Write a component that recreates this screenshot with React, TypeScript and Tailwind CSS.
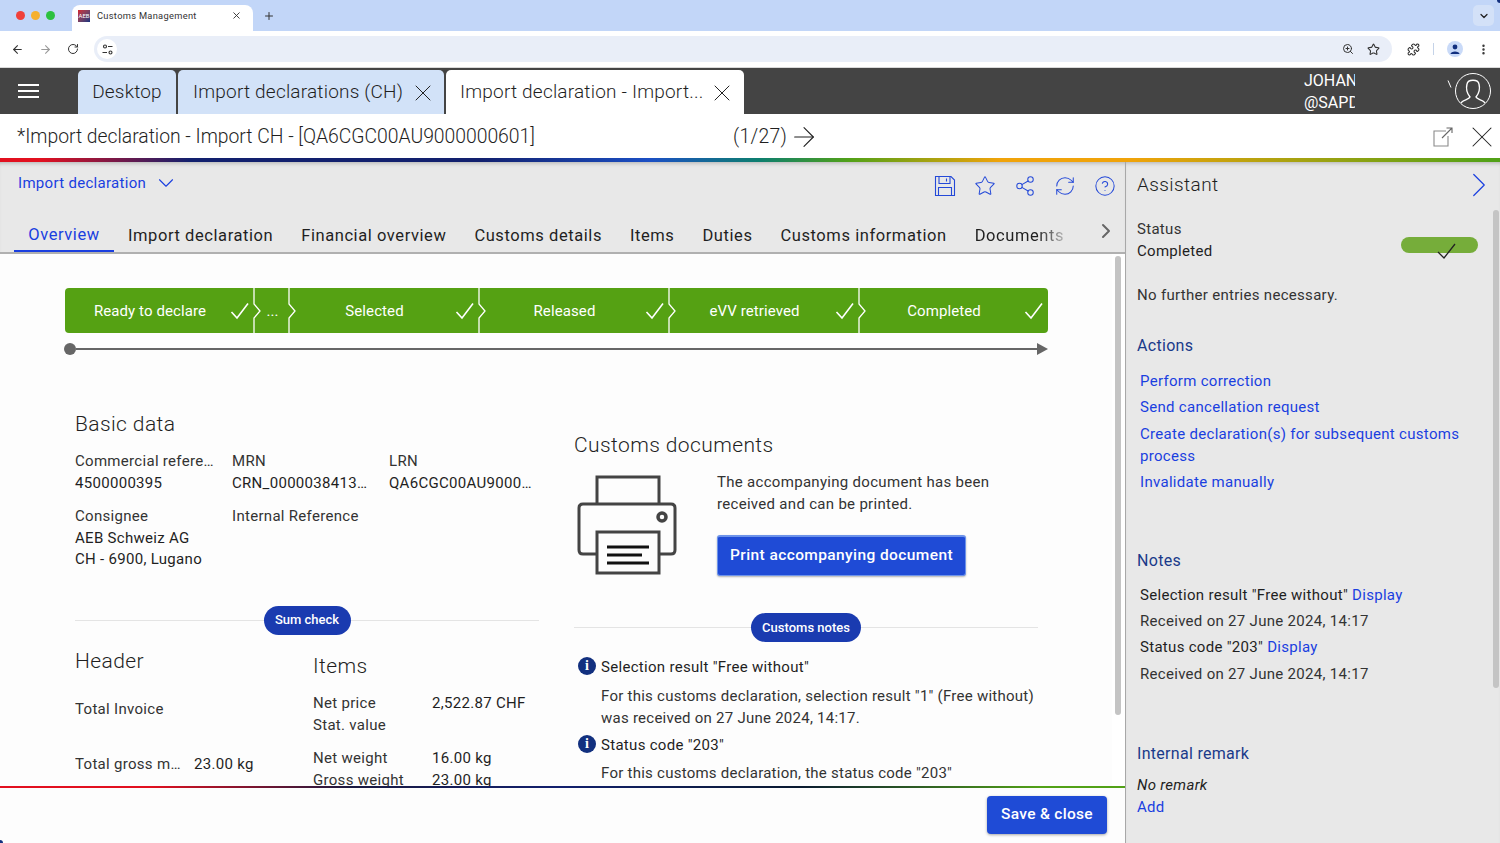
import { ArrowLeft, ArrowRight, ChevronDown, ChevronRight, CircleHelp, EllipsisVertical, Plus, Puzzle, RefreshCw, RotateCw, Share2, Star, X, ZoomIn } from 'lucide-react';

const font = { fontFamily: 'Roboto, "Liberation Sans", sans-serif' };

const steps = [
  { label: 'Ready to declare', width: 'w-[189px]', check: true },
  { label: '...', width: 'w-[35px]', check: false },
  { label: 'Selected', width: 'w-[190px]', check: true },
  { label: 'Released', width: 'w-[190px]', check: true },
  { label: 'eVV retrieved', width: 'w-[190px]', check: true },
  { label: 'Completed', width: 'w-[189px]', check: true },
];

const tabs = ['Import declaration', 'Financial overview', 'Customs details', 'Items', 'Duties', 'Customs information'];

const Check = () => (
  <svg width="20" height="18" viewBox="0 0 20 18" fill="none" stroke="white" strokeWidth="1.6" className="shrink-0">
    <path d="M1.5 10 L7 16 L18 1.5" />
  </svg>
);

const Chevron = () => (
  <svg width="9" height="45" viewBox="0 0 9 45" fill="none" stroke="white" strokeWidth="1.3" className="absolute left-[-1px] top-0">
    <path d="M1 0 V16 L7 23 L1 30 V45" />
  </svg>
);

const Field = ({ label, children }: { label: string; children?: React.ReactNode }) => (
  <div className="min-w-0 leading-[21.5px]">
    <div className="truncate text-[#333]">{label}</div>
    {children}
  </div>
);

const Divider = ({ label, pill }: { label: string; pill: string }) => (
  <div className="flex items-center">
    <div className="h-px flex-1 bg-[#e4e4e4]" />
    <div className={`flex h-[29px] items-center justify-center rounded-full bg-[#1a3bb0] text-[13px] font-medium tracking-normal text-white ${pill}`}>{label}</div>
    <div className="h-px flex-1 bg-[#e4e4e4]" />
  </div>
);

const InfoDot = () => (
  <div className="-mt-[2px] flex h-[18px] w-[18px] shrink-0 items-center justify-center rounded-full bg-[#12307f] text-[14px] font-bold leading-none text-white" style={{ fontFamily: '"Liberation Serif", serif' }}>
    i
  </div>
);

const Printer = () => (
  <svg width="100" height="100" viewBox="0 0 100 100" fill="none" stroke="#444" strokeWidth="3" className="-mt-px ml-[3px] shrink-0">
    <path d="M20 29 V2 H82 V29" />
    <path d="M20 79 H6 Q2 79 2 75 V33 Q2 29 6 29 H94 Q98 29 98 33 V75 Q98 79 94 79 H82" />
    <rect x="20" y="57" width="62" height="41" />
    <circle cx="85" cy="42" r="4" strokeWidth="3.5" />
    <path d="M30 72 H72 M30 80 H65 M30 88 H72" stroke="#111" />
  </svg>
);

const FloppyIcon = () => (
  <svg width="22" height="22" viewBox="0 0 22 22" fill="none" stroke="#2449d8" strokeWidth="1.1">
    <path d="M1.5 1.5 H17 L20.5 5 V20.5 H1.5 Z" />
    <path d="M5 1.5 V8.5 H16 V1.5 M12.5 3.5 V6.5 M4.5 20.5 V12.5 H17.5 V20.5" />
  </svg>
);

const PopOutIcon = () => (
  <svg width="20" height="20" viewBox="0 0 20 20" fill="none" stroke="#8a8a8a" strokeWidth="1.1">
    <path d="M13 4 H1 V19 H15 V9" />
    <path d="M9 11 L19 1 M13.5 1 H19 V6" stroke="#666" />
  </svg>
);

const BodyRow = ({ children }: { children: React.ReactNode }) => <div className="leading-[22px] text-[#333]">{children}</div>;

export default function App() {
  return (
    <div style={font} className="relative flex h-[843px] w-[1500px] flex-col overflow-hidden bg-white text-[15px] tracking-[0.3px] text-[#1f1f1f]">
      {/* Browser tab strip */}
      <div className="flex h-[31px] shrink-0 items-end bg-[#c2d6f8] pl-[16px] pr-[6px]">
        <div className="mb-[11px] flex w-[56px] gap-[6px]">
          <span className="h-[9px] w-[9px] rounded-full bg-[#f0403a]" />
          <span className="h-[9px] w-[9px] rounded-full bg-[#f5b02e]" />
          <span className="h-[9px] w-[9px] rounded-full bg-[#2cc13f]" />
        </div>
        <div className="flex h-[26px] w-[181px] items-center rounded-t-[8px] bg-white pb-[5px] pl-[6px] pr-[11px]">
          <div className="flex h-[12px] w-[12px] items-center justify-center overflow-hidden bg-gradient-to-br from-[#d4202c] to-[#12307f] text-[6px] leading-none tracking-normal text-white">AEB</div>
          <span className="ml-[7px] flex-1 text-[9.3px] text-[#333]">Customs Management</span>
          <X size={11} strokeWidth={2} className="text-[#333]" />
        </div>
        <Plus size={12} strokeWidth={2} className="mb-[9px] ml-[10px] text-[#333]" />
        <div className="mb-[5px] ml-auto flex h-[21px] w-[21px] items-center justify-center rounded-[5px] bg-[#d3e1f8]">
          <ChevronDown size={12} strokeWidth={2.5} className="text-[#222]" />
        </div>
      </div>

      {/* Browser toolbar */}
      <div className="flex h-[37px] shrink-0 items-center border-b border-[#d9d9d9] bg-white pl-[11px]">
        <ArrowLeft size={13} strokeWidth={2} className="text-[#333]" />
        <ArrowRight size={13} strokeWidth={2} className="ml-[15px] text-[#9a9a9a]" />
        <RotateCw size={12} strokeWidth={2} className="ml-[15px] text-[#333]" />
        <div className="ml-[15px] flex h-[26px] w-[1298px] items-center rounded-full bg-[#e9eef8] pl-[3px] pr-[12px]">
          <div className="flex h-[20px] w-[20px] items-center justify-center rounded-full bg-white">
            <svg width="11" height="11" viewBox="0 0 11 11" fill="none" stroke="#333" strokeWidth="1.1">
              <circle cx="3" cy="2.5" r="1.5" />
              <path d="M6 2.5 H10.5 M0.5 8.5 H5" />
              <circle cx="8.5" cy="8.5" r="1.5" />
            </svg>
          </div>
          <ZoomIn size={12} strokeWidth={2} className="ml-auto text-[#333]" />
          <Star size={13} strokeWidth={2} className="ml-[13px] text-[#333]" />
        </div>
        <Puzzle size={13} strokeWidth={2} className="ml-[15px] text-[#333]" />
        <div className="ml-[13px] h-[12px] w-px bg-[#c5d3e8]" />
        <div className="ml-[13px] flex h-[16px] w-[16px] items-center justify-center rounded-full bg-[#c9daf8]">
          <svg width="10" height="10" viewBox="0 0 10 10" fill="#12307f">
            <circle cx="5" cy="3" r="2.4" />
            <path d="M0.5 10 C0.5 6.5 9.5 6.5 9.5 10 Z" />
          </svg>
        </div>
        <EllipsisVertical size={13} strokeWidth={2.5} className="ml-[14px] text-[#333]" />
      </div>

      {/* App header with document tabs */}
      <div className="flex h-[46px] shrink-0 items-end bg-[#444444] text-[19px] font-light tracking-[0.2px]">
        <div className="flex h-[46px] w-[78px] items-center pb-[1px] pl-[18px]">
          <div className="flex w-[21px] flex-col gap-[4px]">
            <span className="h-[2px] bg-white" />
            <span className="h-[2px] bg-white" />
            <span className="h-[2px] bg-white" />
          </div>
        </div>
        <div className="flex h-[44px] w-[98px] items-center justify-center rounded-t-[5px] bg-[#d2e2f8] pt-[1px]">Desktop</div>
        <div className="ml-[2px] flex h-[44px] w-[266px] items-center rounded-t-[5px] bg-[#d2e2f8] pl-[15px] pt-[1px]">
          Import declarations (CH)
          <X size={28} strokeWidth={0.85} className="ml-[6px]" />
        </div>
        <div className="ml-[2px] flex h-[44px] w-[298px] items-center rounded-t-[5px] bg-white pl-[14px] pt-[1px]">
          Import declaration - Import...
          <X size={28} strokeWidth={0.85} className="ml-[5px]" />
        </div>
        <div className="ml-[560px] w-[51px] overflow-hidden whitespace-nowrap text-[16px] font-normal leading-[22px] tracking-normal text-white">
          JOHANNES
          <br />
          @SAPDEMO
        </div>
        <svg width="5" height="8" viewBox="0 0 5 8" fill="none" stroke="white" strokeWidth="1" className="mb-[26px] ml-[92px]">
          <path d="M1 0.5 L4 7.5" />
        </svg>
        <div className="mb-[5px] ml-[3px] flex h-[36px] w-[36px] items-center justify-center overflow-hidden rounded-full border-[1.5px] border-white">
          <svg width="30" height="30" viewBox="0 0 30 30" fill="none" stroke="white" strokeWidth="1.4">
            <path d="M2 29 C2 24 11 24 12 21 C8 16 8 12 9 8 C10 3 20 3 21 8 C22 12 22 16 18 21 C19 24 28 24 28 29" />
          </svg>
        </div>
      </div>

      {/* Title bar */}
      <div className="flex h-[44px] shrink-0 items-center bg-white pl-[17px] pt-[1px] text-[19.35px] font-light tracking-[-0.02px]">
        <div className="w-[716px] whitespace-nowrap">*Import declaration - Import CH - [QA6CGC00AU9000000601]</div>
        <span className="tracking-[0.3px]">(1/27)</span>
        <ArrowRight size={32} strokeWidth={0.8} className="ml-px" />
        <div className="ml-auto flex items-center gap-[11px]">
          <PopOutIcon />
          <X size={36} strokeWidth={0.7} />
        </div>
      </div>
      <div className="h-[4px] shrink-0 bg-[linear-gradient(90deg,#e2101f_0px,#e2101f_40px,#12206e_190px,#12206e_480px,#1b4fc4_650px,#0d7f6e_760px,#52a117_850px,#f0a30a_1000px,#f0a30a_1130px,#52a117_1490px)]" />

      <div className="flex min-h-0 flex-1">
        {/* Main column */}
        <div className="flex w-[1125px] shrink-0 flex-col">
          <div className="h-[92px] shrink-0 border-b-2 border-[#b0b0b0] bg-[#e8e8e8] shadow-[inset_0_4px_4px_-3px_rgba(0,0,0,0.25)]">
            <div className="flex h-[46px] items-center pl-[18px] pr-[9px]">
              <span className="-mt-[4px] text-[#1a3fe0]">Import declaration</span>
              <ChevronDown size={26} strokeWidth={1} className="-mt-[4px] ml-[7px] text-[#1a3fe0]" />
              <div className="ml-auto flex items-center gap-[18px] pt-[2px] text-[#2449d8]">
                <FloppyIcon />
                <Star size={22} strokeWidth={1.1} />
                <Share2 size={22} strokeWidth={1.1} />
                <RefreshCw size={22} strokeWidth={1.1} />
                <CircleHelp size={22} strokeWidth={1.1} />
              </div>
            </div>
            <div className="flex h-[44px] items-end pl-[14px] text-[16.5px] tracking-[0.57px]">
              <div className="flex h-[44px] w-[100px] items-center justify-center border-b-[2px] border-[#1a3fe0] pt-[12px] text-[#1a3fe0]">Overview</div>
              <div className="ml-[14px] flex h-[44px] items-center gap-[28px] pt-[12px] whitespace-nowrap">
                {tabs.map((tab) => (
                  <span key={tab}>{tab}</span>
                ))}
                <span className="bg-[linear-gradient(90deg,#1f1f1f_0%,#1f1f1f_70%,#b5b5b5_100%)] bg-clip-text text-transparent">Documents</span>
              </div>
              <ChevronRight size={24} strokeWidth={2} className="mb-[9px] ml-[30px] text-[#666]" />
            </div>
          </div>

          {/* Scrolling overview, clipped by the footer */}
          <div className="flex min-h-0 flex-1">
            <div className="min-w-0 flex-1 overflow-hidden bg-[#fdfdfd] pl-[65px] pt-[34px]">
              <div className="flex h-[45px] w-[983px] overflow-hidden rounded-[4px] bg-[#55a113] tracking-[0.1px] text-white">
                {steps.map((step, i) => (
                  <div key={i} className={`relative flex shrink-0 items-center ${step.width} ${step.check ? 'pl-[5px] pr-[4px]' : 'justify-center pl-[2px]'}`}>
                    {i > 0 && <Chevron />}
                    <span className={step.check ? 'flex-1 pt-[1px] text-center' : 'pt-[1px]'}>{step.label}</span>
                    {step.check && <Check />}
                  </div>
                ))}
              </div>
              <div className="mt-[10px] flex h-[12px] w-[983px] items-center">
                <span className="-ml-px h-[12px] w-[12px] rounded-full bg-[#666]" />
                <span className="h-[2px] flex-1 bg-[#666]" />
                <svg width="11" height="12" viewBox="0 0 11 12" fill="#666">
                  <path d="M0 0 L11 6 L0 12 Z" />
                </svg>
              </div>

              <div className="mt-[55px] flex items-start pl-[10px]">
                {/* Left side */}
                <div className="w-[464px] shrink-0">
                  <h2 className="text-[21px] font-light leading-[28px] tracking-[0.4px]">Basic data</h2>
                  <div className="mt-[13px] grid grid-cols-[147px_147px_147px] gap-x-[10px] gap-y-[12px]">
                    <Field label="Commercial reference">
                      <div>4500000395</div>
                    </Field>
                    <Field label="MRN">
                      <div className="w-[138px] truncate">CRN_00000384130000</div>
                    </Field>
                    <Field label="LRN">
                      <div className="truncate">QA6CGC00AU9000000601</div>
                    </Field>
                    <Field label="Consignee">
                      <div>AEB Schweiz AG</div>
                      <div>CH - 6900, Lugano</div>
                    </Field>
                    <Field label="Internal Reference" />
                  </div>
                  <div className="mt-[35px]">
                    <Divider label="Sum check" pill="w-[87px]" />
                  </div>
                  <div className="mt-[12px] flex items-start">
                    <div className="w-[238px] shrink-0">
                      <h2 className="text-[21px] font-light leading-[28px] tracking-[0.4px]">Header</h2>
                      <div className="mt-[23px] leading-[22px] text-[#333]">Total Invoice</div>
                      <div className="mt-[33px] flex leading-[22px]">
                        <span className="mr-[11px] w-[108px] truncate text-[#333]">Total gross mass</span>
                        <span>23.00 kg</span>
                      </div>
                    </div>
                    <div className="pt-[5px]">
                      <h2 className="text-[21px] font-light leading-[28px] tracking-[0.4px]">Items</h2>
                      <div className="mt-[12px] grid grid-cols-[119px_auto] leading-[22px]">
                        <span className="text-[#333]">Net price</span>
                        <span>2,522.87 CHF</span>
                        <span className="text-[#333]">Stat. value</span>
                        <span />
                        <span className="mt-[11px] text-[#333]">Net weight</span>
                        <span className="mt-[11px]">16.00 kg</span>
                        <span className="text-[#333]">Gross weight</span>
                        <span>23.00 kg</span>
                      </div>
                    </div>
                  </div>
                </div>

                {/* Right side */}
                <div className="ml-[35px] w-[464px] shrink-0 pt-[21px]">
                  <h2 className="text-[21px] font-light leading-[28px] tracking-[0.4px]">Customs documents</h2>
                  <div className="mt-[17px] flex items-start">
                    <Printer />
                    <div className="-mt-[5px] ml-[40px]">
                      <div className="leading-[22px] text-[#333]">
                        The accompanying document has been
                        <br />
                        received and can be printed.
                      </div>
                      <button className="mt-[20px] flex h-[41px] w-[249px] items-center justify-center rounded-[3px] border border-t-2 border-[#6d93ea] bg-[#1f4bd6] text-[15.5px] font-medium tracking-[0.4px] text-white shadow-[0_1px_2px_rgba(0,0,0,0.3)]">
                        Print accompanying document
                      </button>
                    </div>
                  </div>
                  <div className="mt-[37px]">
                    <Divider label="Customs notes" pill="w-[110px]" />
                  </div>
                  <div className="ml-[4px] mt-[13px] flex flex-col">
                    <div className="flex h-[24px] items-center gap-[5px]">
                      <InfoDot />
                      <span>Selection result "Free without"</span>
                    </div>
                    <div className="ml-[23px] mt-[6px] leading-[22px] tracking-[0.25px] text-[#333]">
                      For this customs declaration, selection result "1" (Free without)
                      <br />
                      was received on 27 June 2024, 14:17.
                    </div>
                    <div className="mt-[4px] flex h-[24px] items-center gap-[5px]">
                      <InfoDot />
                      <span>Status code "203"</span>
                    </div>
                    <div className="ml-[23px] mt-[5px] leading-[22px] tracking-[0.25px] text-[#333]">For this customs declaration, the status code "203"</div>
                  </div>
                </div>
              </div>
            </div>
            <div className="w-[13px] shrink-0 bg-white pl-[3px] pt-[2px]">
              <div className="h-[459px] w-[6px] rounded-full bg-[#c4c4c4]" />
            </div>
          </div>

          {/* Footer */}
          <div className="h-[2px] shrink-0 bg-[linear-gradient(90deg,#e2101f_0px,#e2101f_150px,#1a1a40_350px,#12206e_560px,#0a1a30_800px,#52a117_1040px)]" />
          <div className="flex h-[55px] shrink-0 items-start justify-end bg-[#fdfdfd] pr-[18px] pt-[8px]">
            <button className="flex h-[38px] w-[120px] items-center justify-center rounded-[4px] bg-[#1f4bd6] text-[15.5px] font-medium tracking-[0.3px] text-white shadow-[0_1px_3px_rgba(0,0,0,0.35)]">
              Save &amp; close
            </button>
          </div>
        </div>

        {/* Assistant panel */}
        <div className="relative flex min-w-0 flex-1 flex-col border-l border-[#a8a8a8] bg-[#e8e8e8] pl-[11px] shadow-[inset_0_4px_4px_-3px_rgba(0,0,0,0.25)]">
          <div className="flex h-[46px] items-center">
            <span className="text-[19px] font-light tracking-[0.4px]">Assistant</span>
            <ChevronRight size={42} strokeWidth={0.7} className="ml-auto text-[#1a3fe0]" />
          </div>
          <div className="mt-[10px] flex items-start pr-[22px] leading-[22px]">
            <div>
              <div className="text-[#333]">Status</div>
              <div>Completed</div>
            </div>
            <div className="relative ml-auto mt-[19px] h-[16px] w-[77px] rounded-full bg-[#76ad3a]">
              <svg width="20" height="18" viewBox="0 0 20 18" fill="none" stroke="#222" strokeWidth="1.3" className="absolute left-[36px] top-[6px]">
                <path d="M1 9 L7 15 L18 1" />
              </svg>
            </div>
          </div>
          <div className="mt-[22px] leading-[22px] text-[#333]">No further entries necessary.</div>

          <h3 className="mt-[29px] text-[16px] leading-[22px] text-[#1a3a8a]">Actions</h3>
          <div className="ml-[3px] mt-[13px] flex flex-col gap-[4.25px] leading-[22px] text-[#1a3fe0]">
            <span>Perform correction</span>
            <span>Send cancellation request</span>
            <span>
              Create declaration(s) for subsequent customs
              <br />
              process
            </span>
            <span>Invalidate manually</span>
          </div>

          <h3 className="mt-[57px] text-[16px] leading-[22px] text-[#1a3a8a]">Notes</h3>
          <div className="ml-[3px] mt-[12px] flex flex-col gap-[4.25px]">
            <div className="leading-[22px]">
              Selection result "Free without" <span className="text-[#1a3fe0]">Display</span>
            </div>
            <BodyRow>Received on 27 June 2024, 14:17</BodyRow>
            <div className="leading-[22px]">
              Status code "203" <span className="text-[#1a3fe0]">Display</span>
            </div>
            <BodyRow>Received on 27 June 2024, 14:17</BodyRow>
          </div>

          <h3 className="mt-[58px] text-[16px] leading-[22px] text-[#1a3a8a]">Internal remark</h3>
          <div className="mt-[9px] italic leading-[22px]">No remark</div>
          <div className="leading-[22px] text-[#1a3fe0]">Add</div>

          <div className="absolute right-[1px] top-[48px] h-[478px] w-[6px] rounded-full bg-[#c4c4c4]" />
        </div>
      </div>

      {/* Window corners peeking through */}
      <div className="absolute bottom-0 left-0 h-[3px] w-[3px] rounded-tr-full bg-[#12307f]" />
      <div className="absolute right-0 top-0 h-[3px] w-[3px] rounded-bl-full bg-[#12307f]" />
    </div>
  );
}
